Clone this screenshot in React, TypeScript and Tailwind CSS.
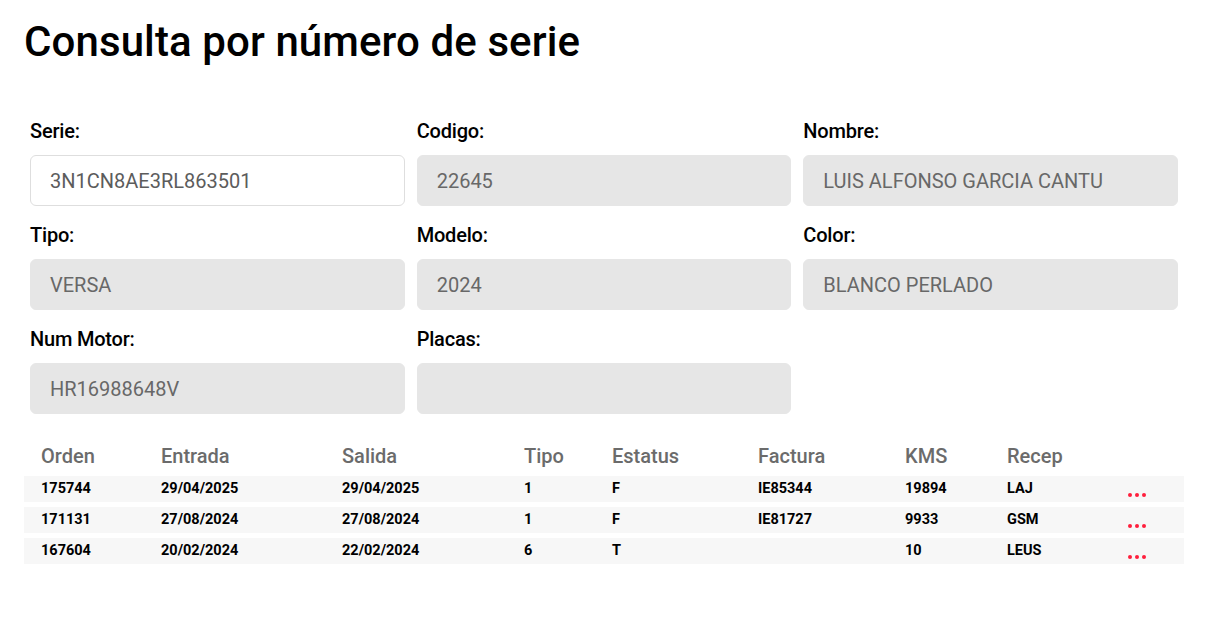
const fields = [
  { label: "Serie:", value: "3N1CN8AE3RL863501", editable: true },
  { label: "Codigo:", value: "22645" },
  { label: "Nombre:", value: "LUIS ALFONSO GARCIA CANTU" },
  { label: "Tipo:", value: "VERSA" },
  { label: "Modelo:", value: "2024" },
  { label: "Color:", value: "BLANCO PERLADO" },
  { label: "Num Motor:", value: "HR16988648V" },
  { label: "Placas:", value: "" },
]

const columns = ["Orden", "Entrada", "Salida", "Tipo", "Estatus", "Factura", "KMS", "Recep"]

const orders = [
  ["175744", "29/04/2025", "29/04/2025", "1", "F", "IE85344", "19894", "LAJ"],
  ["171131", "27/08/2024", "27/08/2024", "1", "F", "IE81727", "9933", "GSM"],
  ["167604", "20/02/2024", "22/02/2024", "6", "T", "", "10", "LEUS"],
]

const gridCols = "grid grid-cols-[120px_181px_182px_88px_146px_147px_102px_121px_1fr] pl-[17px]"

function Dots() {
  return (
    <div className="flex gap-[3px] pt-[11px]">
      <span className="h-[4px] w-[4px] rounded-full bg-[#ff1f3d]" />
      <span className="h-[4px] w-[4px] rounded-full bg-[#ff1f3d]" />
      <span className="h-[4px] w-[4px] rounded-full bg-[#ff1f3d]" />
    </div>
  )
}

export default function App() {
  return (
    <div className="min-h-screen bg-white font-['Roboto',sans-serif] text-black">
      <div className="w-[1208px] px-6 pt-[14px]">
        <h1 className="text-[42px] font-medium leading-[56px] tracking-[0.1px]">Consulta por número de serie</h1>

        <div className="mt-[47px] grid grid-cols-3">
          {fields.map((f) => (
            <div key={f.label} className="px-[6px]">
              <label className="block text-[20px] font-medium leading-[28px] tracking-[-0.2px]">{f.label}</label>
              <div
                className={
                  f.editable
                    ? "mt-[10px] mb-[15px] flex h-[51px] items-center rounded-[6px] border border-[#dedede] bg-white px-[19px] text-[20px] text-[#5c5c5c]"
                    : "mt-[10px] mb-[15px] flex h-[51px] items-center rounded-[6px] border border-[#e6e6e6] bg-[#e6e6e6] px-[19px] text-[20px] text-[#686868]"
                }
              >
                {f.value}
              </div>
            </div>
          ))}
        </div>

        <div className="mt-[7px]">
          <div className={gridCols + " h-[40px] items-center text-[20px] font-medium text-[#6b6b6b]"}>
            {columns.map((c) => (
              <div key={c}>{c}</div>
            ))}
            <div />
          </div>
          <div className="flex flex-col gap-[5px]">
            {orders.map((row) => (
              <div key={row[0]} className={gridCols + " h-[26px] items-center bg-[#f7f7f7] text-[14.5px] font-bold"}>
                {row.map((cell, i) => (
                  <div key={i}>{cell}</div>
                ))}
                <Dots />
              </div>
            ))}
          </div>
        </div>
      </div>
    </div>
  )
}
